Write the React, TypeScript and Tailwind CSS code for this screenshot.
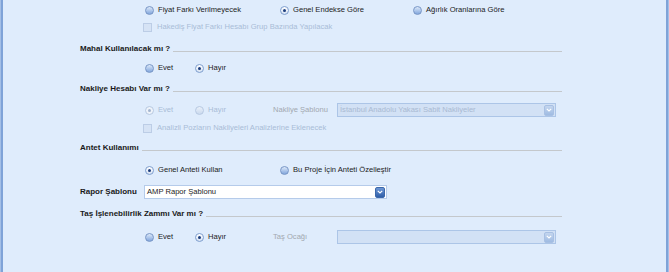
import { ReactNode } from 'react'

function Radio({ checked, disabled }: { checked?: boolean; disabled?: boolean }) {
  if (checked) {
    return (
      <span
        className={`flex h-[9px] w-[9px] shrink-0 items-center justify-center rounded-full border ${
          disabled ? 'border-[#b7c9e2] bg-[#eef3fa]' : 'border-[#7f9fcf] bg-gradient-to-b from-white to-[#d6e2f3]'
        }`}
      >
        <span className={`h-[3px] w-[3px] rounded-full ${disabled ? 'bg-[#a3b5cf]' : 'bg-[#1c3d7c]'}`} />
      </span>
    )
  }
  return (
    <span
      className={`h-[9px] w-[9px] shrink-0 rounded-full border ${
        disabled
          ? 'border-[#b7c9e2] bg-gradient-to-b from-[#eaf1fa] to-[#cad9ee]'
          : 'border-[#7896c6] bg-gradient-to-b from-[#dde9f9] to-[#82a6dc]'
      }`}
    />
  )
}

function Option({ label, checked, disabled, width }: { label: string; checked?: boolean; disabled?: boolean; width: string }) {
  return (
    <div className={`flex items-center gap-[4px] ${width}`}>
      <Radio checked={checked} disabled={disabled} />
      <span className={disabled ? 'text-[#a9bcd7]' : 'text-[#1b1b1b]'}>{label}</span>
    </div>
  )
}

function Check({ label }: { label: string }) {
  return (
    <div className="flex items-center gap-[5px] pl-[63px]">
      <span className="h-[9px] w-[9px] shrink-0 border border-[#bccde6] bg-[#d6e3f5]" />
      <span className="text-[#a9bcd7]">{label}</span>
    </div>
  )
}

function Heading({ children }: { children: ReactNode }) {
  return (
    <div className="flex h-full items-center">
      <span className="whitespace-nowrap text-[8px] font-bold text-[#1a1a1a]">{children}</span>
      <span className="ml-[3px] mt-[5px] h-px flex-1 bg-[#c4c8cc]" />
    </div>
  )
}

function DropButton({ disabled }: { disabled?: boolean }) {
  return (
    <span
      className={`flex h-[11px] w-[10px] items-center justify-center rounded-[2px] border ${
        disabled
          ? 'border-[#a8c0e3] bg-gradient-to-b from-[#c4d6ef] to-[#9fbbe2]'
          : 'border-[#3d68aa] bg-gradient-to-b from-[#6e98d6] to-[#2f5ea8]'
      }`}
    >
      <svg width="6" height="4" viewBox="0 0 6 4">
        <path d="M0.8 0.8 L3 3 L5.2 0.8" stroke="white" strokeWidth="1.2" fill="none" />
      </svg>
    </span>
  )
}

function Combo({ text, disabled, width }: { text?: string; disabled?: boolean; width: string }) {
  return (
    <div
      className={`flex h-[14px] items-center justify-between border pl-[2px] pr-px ${width} ${
        disabled ? 'border-[#acc5e7] bg-[#d2e1f5]' : 'border-[#b5cbea] bg-white'
      }`}
    >
      <span className={disabled ? 'text-[#a9bad3]' : 'text-[#1b1b1b]'}>{text}</span>
      <DropButton disabled={disabled} />
    </div>
  )
}

export default function App() {
  return (
    <div
      className="flex h-[272px] w-[669px] overflow-hidden bg-[#dfecfc] text-[7.6px] leading-none"
      style={{ fontFamily: '"Liberation Sans", Arial, sans-serif' }}
    >
      <div className="w-[3px] shrink-0 border-l border-[#a4bfe6] bg-[#7fa3d8]" />
      <div className="flex w-[559px] shrink-0 flex-col pl-[77px]">
        {/* Fiyat farkı */}
        <div className="mt-[2px] flex h-[16px] items-center pl-[65px]">
          <Option label="Fiyat Farkı Verilmeyecek" width="w-[135px]" />
          <Option label="Genel Endekse Göre" checked width="w-[133px]" />
          <Option label="Ağırlık Oranlarına Göre" width="w-[140px]" />
        </div>
        <div className="mt-px flex h-[16px] items-center">
          <Check label="Hakediş Fiyat Farkı Hesabı Grup Bazında Yapılacak" />
        </div>

        <div className="mt-[6px] h-[16px]">
          <Heading>Mahal Kullanılacak mı ?</Heading>
        </div>
        <div className="mt-[3px] flex h-[16px] items-center pl-[65px]">
          <Option label="Evet" width="w-[50px]" />
          <Option label="Hayır" checked width="w-[60px]" />
        </div>

        <div className="mt-[5px] h-[16px]">
          <Heading>Nakliye Hesabı Var mı ?</Heading>
        </div>
        <div className="mt-[5px] flex h-[16px] items-center pl-[65px]">
          <Option label="Evet" checked disabled width="w-[50px]" />
          <Option label="Hayır" disabled width="w-[78px]" />
          <span className="w-[64px] text-[#a2a8b0]">Nakliye Şablonu</span>
          <Combo text="İstanbul Anadolu Yakası Sabit Nakliyeler" disabled width="w-[219px]" />
        </div>
        <div className="mt-[2px] flex h-[16px] items-center">
          <Check label="Analizli Pozların Nakliyeleri Analizlerine Eklenecek" />
        </div>

        <div className="mt-[4px] h-[16px]">
          <Heading>Antet Kullanımı</Heading>
        </div>
        <div className="mt-[6px] flex h-[16px] items-center pl-[65px]">
          <Option label="Genel Anteti Kullan" checked width="w-[135px]" />
          <Option label="Bu Proje İçin Anteti Özelleştir" width="w-[160px]" />
        </div>

        <div className="mt-[6px] flex h-[16px] items-center">
          <span className="w-[64px] text-[8px] font-bold text-[#1a1a1a]">Rapor Şablonu</span>
          <Combo text="AMP Rapor Şablonu" width="w-[243px]" />
        </div>

        <div className="mt-[6px] h-[16px]">
          <Heading>Taş İşlenebilirlik Zammı Var mı ?</Heading>
        </div>
        <div className="mt-[7px] flex h-[16px] items-center pl-[65px]">
          <Option label="Evet" width="w-[50px]" />
          <Option label="Hayır" checked width="w-[78px]" />
          <span className="w-[64px] text-[#a2a8b0]">Taş Ocağı</span>
          <Combo disabled width="w-[219px]" />
        </div>
      </div>
      <div className="flex-1" />
      <div className="w-[3px] shrink-0 border-r border-[#a4bfe6] bg-[#7fa3d8]" />
    </div>
  )
}
